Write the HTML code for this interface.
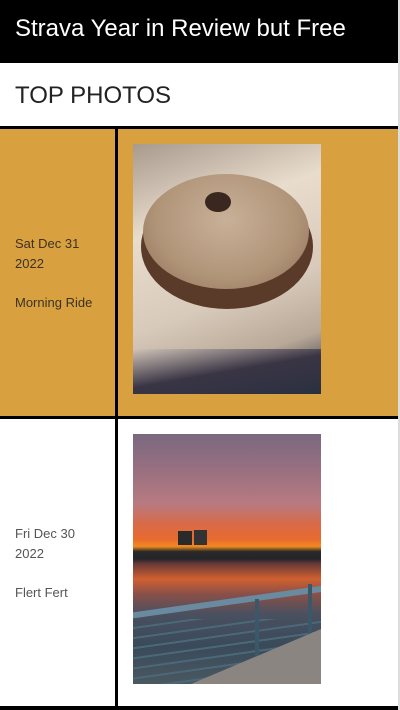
<!DOCTYPE html>
<html><head><meta charset="utf-8"><style>
*{margin:0;padding:0;box-sizing:border-box}
body{width:400px;height:710px;overflow:hidden;background:#fff;font-family:"Liberation Sans",Arial,sans-serif;position:relative}
.hdr{position:absolute;left:0;top:0;width:398px;height:63px;background:#000;color:#fff;font-size:24px;padding:15px 0 0 15px}
.sub{position:absolute;left:0;top:63px;width:398px;height:63px;color:#222;font-size:24px;padding:19px 0 0 15px}
.rb{position:absolute;right:0;top:0;width:2px;height:710px;background:#ddd}
.line{position:absolute;left:0;width:400px;background:#000;height:3px}
.row{position:absolute;left:0;width:398px;height:287px}
.v{position:absolute;left:115px;width:3px;background:#000}
.txt{position:absolute;left:15px;font-size:13px;line-height:19.5px}
.ph{position:absolute;left:133px;width:188px;height:250px;overflow:hidden}
</style></head><body>
<div class="hdr">Strava Year in Review but Free</div>
<div class="sub">TOP PHOTOS</div>
<div class="line" style="top:126px"></div>
<div class="row" style="top:129px;background:#d9a040"></div>
<div class="v" style="top:129px;height:287px"></div>
<div class="txt" style="top:234px;color:#3b3222">Sat Dec 31<br>2022<br><br>Morning Ride</div>
<div class="ph" style="top:144px;background:linear-gradient(160deg,#a89a8c 0%,#e8dccd 30%,#d8cabb 60%,#b8a897 80%,#3c3a48 95%)">
<div style="position:absolute;left:8px;top:40px;width:172px;height:125px;border-radius:50%;background:#5a3a28"></div>
<div style="position:absolute;left:10px;top:30px;width:166px;height:115px;border-radius:50%;background:radial-gradient(ellipse at 50% 40%,#c8b098 0%,#b09478 60%,#8a6a55 100%)"></div>
<div style="position:absolute;left:72px;top:48px;width:26px;height:20px;border-radius:50%;background:#3a2820"></div>
<div style="position:absolute;left:0;top:205px;width:188px;height:45px;background:linear-gradient(170deg,#d0c4b8,#3a3545 50%,#2a3040)"></div>
</div>
<div class="line" style="top:416px"></div>
<div class="v" style="top:419px;height:287px"></div>
<div class="txt" style="top:524px;color:#555">Fri Dec 30<br>2022<br><br>Flert Fert</div>
<div class="ph" style="top:434px;background:linear-gradient(180deg,#7a6880 0%,#9a7080 15%,#b87a80 28%,#d86a48 36%,#e86a30 42%,#f08a20 45%,#2a2a28 47%,#25252a 50%,#6a3a38 52%,#d06030 58%,#8a5048 64%,#4a5060 72%,#3a4a5a 85%,#4a5860 100%)">
<div style="position:absolute;left:45px;top:97px;width:14px;height:14px;background:#2a2a2a"></div>
<div style="position:absolute;left:61px;top:96px;width:13px;height:15px;background:#333"></div>
<div style="position:absolute;left:-10px;top:165px;width:210px;height:6px;background:#6a8aa0;transform:rotate(-8deg)"></div>
<div style="position:absolute;left:0;top:185px;width:188px;height:65px;background:repeating-linear-gradient(172deg,transparent 0 8px,#4a6878 8px 10px)"></div>
<div style="position:absolute;left:122px;top:165px;width:4px;height:85px;background:#3a5868"></div>
<div style="position:absolute;left:175px;top:150px;width:4px;height:80px;background:#3a5868"></div>
<div style="position:absolute;right:0;bottom:0;width:130px;height:55px;background:#8a8580;clip-path:polygon(100% 0,100% 100%,0 100%)"></div>
</div>
<div class="line" style="top:706px;height:4px"></div>
<div class="rb"></div>
</body></html>
